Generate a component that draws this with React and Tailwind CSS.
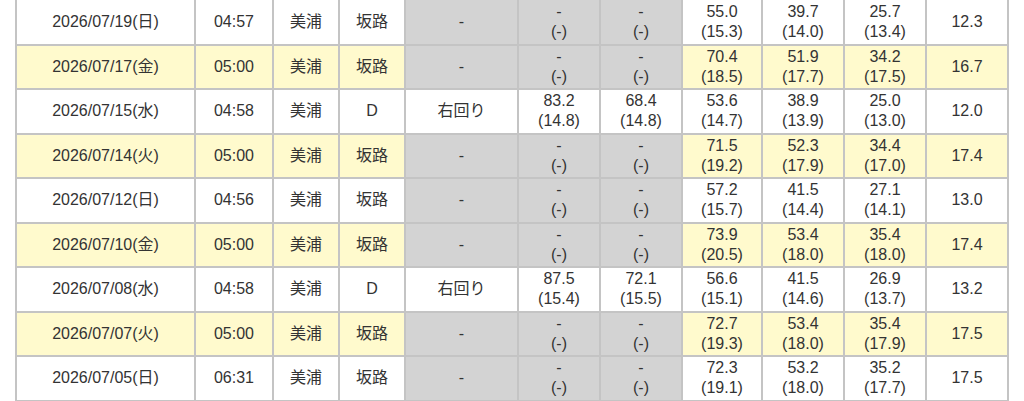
import React from "react";

const rows = [
  { d: "2026/07/19(日)", t: "04:57", c: "坂路", y: false, v: [["55.0", "15.3"], ["39.7", "14.0"], ["25.7", "13.4"]], l: "12.3" },
  { d: "2026/07/17(金)", t: "05:00", c: "坂路", y: true, v: [["70.4", "18.5"], ["51.9", "17.7"], ["34.2", "17.5"]], l: "16.7" },
  { d: "2026/07/15(水)", t: "04:58", c: "D", y: false, a: [["83.2", "14.8"], ["68.4", "14.8"]], v: [["53.6", "14.7"], ["38.9", "13.9"], ["25.0", "13.0"]], l: "12.0" },
  { d: "2026/07/14(火)", t: "05:00", c: "坂路", y: true, v: [["71.5", "19.2"], ["52.3", "17.9"], ["34.4", "17.0"]], l: "17.4" },
  { d: "2026/07/12(日)", t: "04:56", c: "坂路", y: false, v: [["57.2", "15.7"], ["41.5", "14.4"], ["27.1", "14.1"]], l: "13.0" },
  { d: "2026/07/10(金)", t: "05:00", c: "坂路", y: true, v: [["73.9", "20.5"], ["53.4", "18.0"], ["35.4", "18.0"]], l: "17.4" },
  { d: "2026/07/08(水)", t: "04:58", c: "D", y: false, a: [["87.5", "15.4"], ["72.1", "15.5"]], v: [["56.6", "15.1"], ["41.5", "14.6"], ["26.9", "13.7"]], l: "13.2" },
  { d: "2026/07/07(火)", t: "05:00", c: "坂路", y: true, v: [["72.7", "19.3"], ["53.4", "18.0"], ["35.4", "17.9"]], l: "17.5" },
  { d: "2026/07/05(日)", t: "06:31", c: "坂路", y: false, v: [["72.3", "19.1"], ["53.2", "18.0"], ["35.2", "17.7"]], l: "17.5" },
];

function Cell({ bg, children }) {
  return (
    <div className={`${bg} flex flex-col items-center justify-center text-center leading-[20px]`}>
      {children}
    </div>
  );
}

function Two({ a, b }) {
  return (
    <>
      <span>{a}</span>
      <span>({b})</span>
    </>
  );
}

export default function App() {
  return (
    <div className="w-[1024px] h-[401px] overflow-hidden bg-white">
      <div
        className="ml-[15px] -mt-[2px] w-[994px] grid grid-cols-[177px_76px_64px_64px_111px_80px_80px_78px_80px_80px_80px] grid-rows-[43.5px_repeat(8,42.5px)] gap-[2px] p-[2px] bg-[#c4c4c4] text-[16px] text-[#333333]"
        style={{ fontFamily: '"Liberation Sans", "Noto Sans CJK JP", sans-serif' }}
      >
        {rows.map((r, i) => {
          const bg = r.y ? "bg-[#fffacd]" : "bg-white";
          const gray = "bg-[#d3d3d3]";
          const isD = r.c === "D";
          return (
            <React.Fragment key={i}>
              <Cell bg={bg}>{r.d}</Cell>
              <Cell bg={bg}>{r.t}</Cell>
              <Cell bg={bg}>美浦</Cell>
              <Cell bg={bg}>{r.c}</Cell>
              <Cell bg={isD ? bg : gray}>{isD ? "右回り" : "-"}</Cell>
              {isD ? (
                r.a.map((x, j) => (
                  <Cell key={j} bg={bg}>
                    <Two a={x[0]} b={x[1]} />
                  </Cell>
                ))
              ) : (
                <>
                  <Cell bg={gray}>
                    <Two a="-" b="-" />
                  </Cell>
                  <Cell bg={gray}>
                    <Two a="-" b="-" />
                  </Cell>
                </>
              )}
              {r.v.map((x, j) => (
                <Cell key={"v" + j} bg={bg}>
                  <Two a={x[0]} b={x[1]} />
                </Cell>
              ))}
              <Cell bg={bg}>{r.l}</Cell>
            </React.Fragment>
          );
        })}
      </div>
    </div>
  );
}
